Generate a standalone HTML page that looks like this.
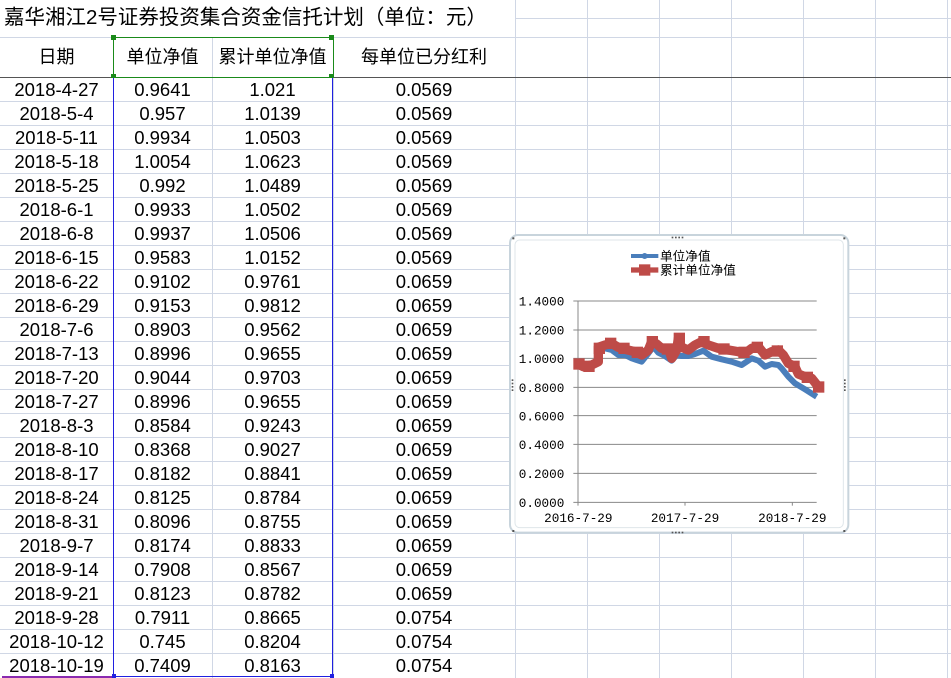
<!DOCTYPE html>
<html><head><meta charset="utf-8">
<style>
body{margin:0;width:951px;height:678px;overflow:hidden;background:#fff;position:relative;font-family:"Liberation Sans","Noto Sans CJK SC",sans-serif;}
.vl{position:absolute;width:1px;background:#d0d7e5;}
.hl{position:absolute;height:1px;background:#d0d7e5;}
.c{position:absolute;height:24px;line-height:24px;text-align:center;font-size:18.5px;color:#000;}
.h{position:absolute;top:37px;height:40px;line-height:40px;text-align:center;font-size:18px;}
</style></head><body>
<div id="grid"></div>
<div style="position:absolute;left:4px;top:4px;font-size:20.5px;line-height:28px;white-space:nowrap;">嘉华湘江2号证券投资集合资金信托计划（单位：元）</div>
<div class="h" style="left:0;width:113px;">日期</div>
<div class="h" style="left:113px;width:99px;">单位净值</div>
<div class="h" style="left:212px;width:121px;">累计单位净值</div>
<div class="h" style="left:333px;width:182px;">每单位已分红利</div>
<div style="position:absolute;left:0;top:77px;width:951px;height:1px;background:#555"></div>
<div style="position:absolute;left:113px;top:37px;width:219px;height:39px;border:1px solid #1a8a1a;"></div>
<div style="position:absolute;left:111px;top:35px;width:5px;height:5px;background:#1a8a1a"></div>
<div style="position:absolute;left:329px;top:35px;width:5px;height:5px;background:#1a8a1a"></div>
<div style="position:absolute;left:111px;top:74px;width:5px;height:4px;background:#1a8a1a"></div>
<div style="position:absolute;left:329px;top:74px;width:5px;height:4px;background:#1a8a1a"></div>
<div style="position:absolute;left:113px;top:78px;width:1px;height:598px;background:#2020e0"></div>
<div style="position:absolute;left:332px;top:78px;width:1px;height:598px;background:#2020e0"></div>
<div style="position:absolute;left:113px;top:676px;width:220px;height:1px;background:#2020e0"></div>
<div style="position:absolute;left:112px;top:674px;width:4px;height:4px;background:#2020e0"></div>
<div style="position:absolute;left:330px;top:674px;width:4px;height:4px;background:#2020e0"></div>
<div style="position:absolute;left:2px;top:676px;width:110px;height:2px;background:#8a2ab0"></div>
<div id="rows"></div>

<svg style="position:absolute;left:505px;top:230px" width="350" height="310" viewBox="0 0 1050 930">
<rect x="15" y="15" width="1015" height="893" rx="24" fill="#fff" stroke="#c8d4dc" stroke-width="6"/>
<rect x="30" y="30" width="985" height="863" rx="14" fill="#fff" stroke="#dfe6ea" stroke-width="3"/>
<g fill="#555"><rect x="500" y="20" width="5" height="5"/><rect x="510" y="20" width="5" height="5"/><rect x="520" y="20" width="5" height="5"/><rect x="530" y="20" width="5" height="5"/>
<rect x="500" y="905" width="5" height="5"/><rect x="510" y="905" width="5" height="5"/><rect x="520" y="905" width="5" height="5"/><rect x="530" y="905" width="5" height="5"/>
<rect x="20" y="448" width="5" height="5"/><rect x="20" y="458" width="5" height="5"/><rect x="20" y="468" width="5" height="5"/><rect x="20" y="478" width="5" height="5"/>
<rect x="1017" y="448" width="5" height="5"/><rect x="1017" y="458" width="5" height="5"/><rect x="1017" y="468" width="5" height="5"/><rect x="1017" y="478" width="5" height="5"/>
<rect x="22" y="22" width="6" height="6"/><rect x="1015" y="22" width="6" height="6"/><rect x="22" y="900" width="6" height="6"/><rect x="1015" y="900" width="6" height="6"/></g>
<line x1="378" y1="78" x2="460" y2="78" stroke="#4a7ebb" stroke-width="12"/>
<circle cx="419" cy="78" r="9" fill="#4a7ebb"/>
<line x1="378" y1="120" x2="460" y2="120" stroke="#be4b48" stroke-width="16"/>
<rect x="402" y="103" width="34" height="34" fill="#be4b48"/>
<text x="465" y="92" font-size="38" font-family="Liberation Sans,Noto Sans CJK SC,sans-serif">单位净值</text>
<text x="465" y="134" font-size="38" font-family="Liberation Sans,Noto Sans CJK SC,sans-serif">累计单位净值</text>
<g stroke="#888" stroke-width="3">
<line x1="205" y1="213" x2="935" y2="213"/><line x1="205" y1="300" x2="935" y2="300"/><line x1="205" y1="385" x2="935" y2="385"/><line x1="205" y1="472" x2="935" y2="472"/><line x1="205" y1="557" x2="935" y2="557"/><line x1="205" y1="643" x2="935" y2="643"/><line x1="205" y1="730" x2="935" y2="730"/><line x1="205" y1="817" x2="935" y2="817"/>
<line x1="219" y1="213" x2="219" y2="827"/><line x1="540" y1="817" x2="540" y2="827"/><line x1="862" y1="817" x2="862" y2="827"/>
</g>
<g font-size="38" font-family="Liberation Mono,monospace" text-anchor="end" fill="#000">
<text x="178" y="227">1.4000</text><text x="178" y="314">1.2000</text><text x="178" y="399">1.0000</text><text x="178" y="486">0.8000</text><text x="178" y="571">0.6000</text><text x="178" y="657">0.4000</text><text x="178" y="744">0.2000</text><text x="178" y="831">0.0000</text>
</g>
<g font-size="38" font-family="Liberation Mono,monospace" text-anchor="middle" fill="#000">
<text x="220" y="876">2016-7-29</text><text x="540" y="876">2017-7-29</text><text x="862" y="876">2018-7-29</text>
</g>
<polyline fill="none" stroke="#4a7ebb" stroke-width="18" stroke-linejoin="round" points="215,400 235,408 260,403 280,390 280,355 300,355 320,360 340,375 360,375 380,385 410,395 430,370 445,350 460,368 480,378 500,392 515,375 530,378 550,378 570,372 595,362 620,380 650,388 680,395 710,405 740,385 760,392 780,410 800,402 820,405 830,415 850,440 870,460 900,478 935,500"/>
<polyline fill="none" stroke="#be4b48" stroke-width="28" stroke-linejoin="round" points="215,400 235,410 260,405 280,395 280,352 300,345 320,340 340,352 360,358 390,365 410,375 430,360 440,335 455,342 470,355 490,355 500,385 515,360 520,325 530,352 550,360 570,345 590,335 610,345 640,355 670,360 700,365 720,370 740,355 760,350 780,375 800,365 820,360 835,375 850,400 870,410 880,432 900,440 920,445 940,470"/>
<g fill="#be4b48"><rect x="205" y="385" width="34" height="34"/><rect x="235" y="392" width="34" height="34"/><rect x="266" y="338" width="34" height="34"/><rect x="300" y="323" width="34" height="34"/><rect x="340" y="338" width="34" height="34"/><rect x="380" y="350" width="34" height="34"/><rect x="425" y="318" width="34" height="34"/><rect x="470" y="340" width="34" height="34"/><rect x="506" y="308" width="34" height="34"/><rect x="580" y="318" width="34" height="34"/><rect x="640" y="340" width="34" height="34"/><rect x="700" y="350" width="34" height="34"/><rect x="740" y="335" width="34" height="34"/><rect x="800" y="346" width="34" height="34"/><rect x="850" y="392" width="34" height="34"/><rect x="890" y="425" width="34" height="34"/><rect x="924" y="454" width="34" height="34"/></g>
</svg>

<script>
var g=document.getElementById('grid'),h='';
var xs=[113,212,333,515,587,659,731,803,875,947];
xs.forEach(function(x,i){var top=i<3?37:0;h+='<div class="vl" style="left:'+x+'px;top:'+top+'px;height:'+(678-top)+'px"></div>';});
h+='<div class="hl" style="left:515px;top:18px;width:436px"></div>';
h+='<div class="hl" style="left:0;top:37px;width:951px"></div>';
for(var i=1;i<25;i++){h+='<div class="hl" style="left:0;top:'+(77+24*i)+'px;width:951px"></div>';}
g.innerHTML=h;
var d=[["2018-4-27","0.9641","1.021","0.0569"],["2018-5-4","0.957","1.0139","0.0569"],["2018-5-11","0.9934","1.0503","0.0569"],["2018-5-18","1.0054","1.0623","0.0569"],["2018-5-25","0.992","1.0489","0.0569"],["2018-6-1","0.9933","1.0502","0.0569"],["2018-6-8","0.9937","1.0506","0.0569"],["2018-6-15","0.9583","1.0152","0.0569"],["2018-6-22","0.9102","0.9761","0.0659"],["2018-6-29","0.9153","0.9812","0.0659"],["2018-7-6","0.8903","0.9562","0.0659"],["2018-7-13","0.8996","0.9655","0.0659"],["2018-7-20","0.9044","0.9703","0.0659"],["2018-7-27","0.8996","0.9655","0.0659"],["2018-8-3","0.8584","0.9243","0.0659"],["2018-8-10","0.8368","0.9027","0.0659"],["2018-8-17","0.8182","0.8841","0.0659"],["2018-8-24","0.8125","0.8784","0.0659"],["2018-8-31","0.8096","0.8755","0.0659"],["2018-9-7","0.8174","0.8833","0.0659"],["2018-9-14","0.7908","0.8567","0.0659"],["2018-9-21","0.8123","0.8782","0.0659"],["2018-9-28","0.7911","0.8665","0.0754"],["2018-10-12","0.745","0.8204","0.0754"],["2018-10-19","0.7409","0.8163","0.0754"]];
var L=[[0,113],[113,99],[212,121],[333,182]],r='';
d.forEach(function(row,i){row.forEach(function(t,j){r+='<div class="c" style="left:'+L[j][0]+'px;width:'+L[j][1]+'px;top:'+(78+24*i)+'px">'+t+'</div>';});});
document.getElementById('rows').innerHTML=r;
</script>
</body></html>
